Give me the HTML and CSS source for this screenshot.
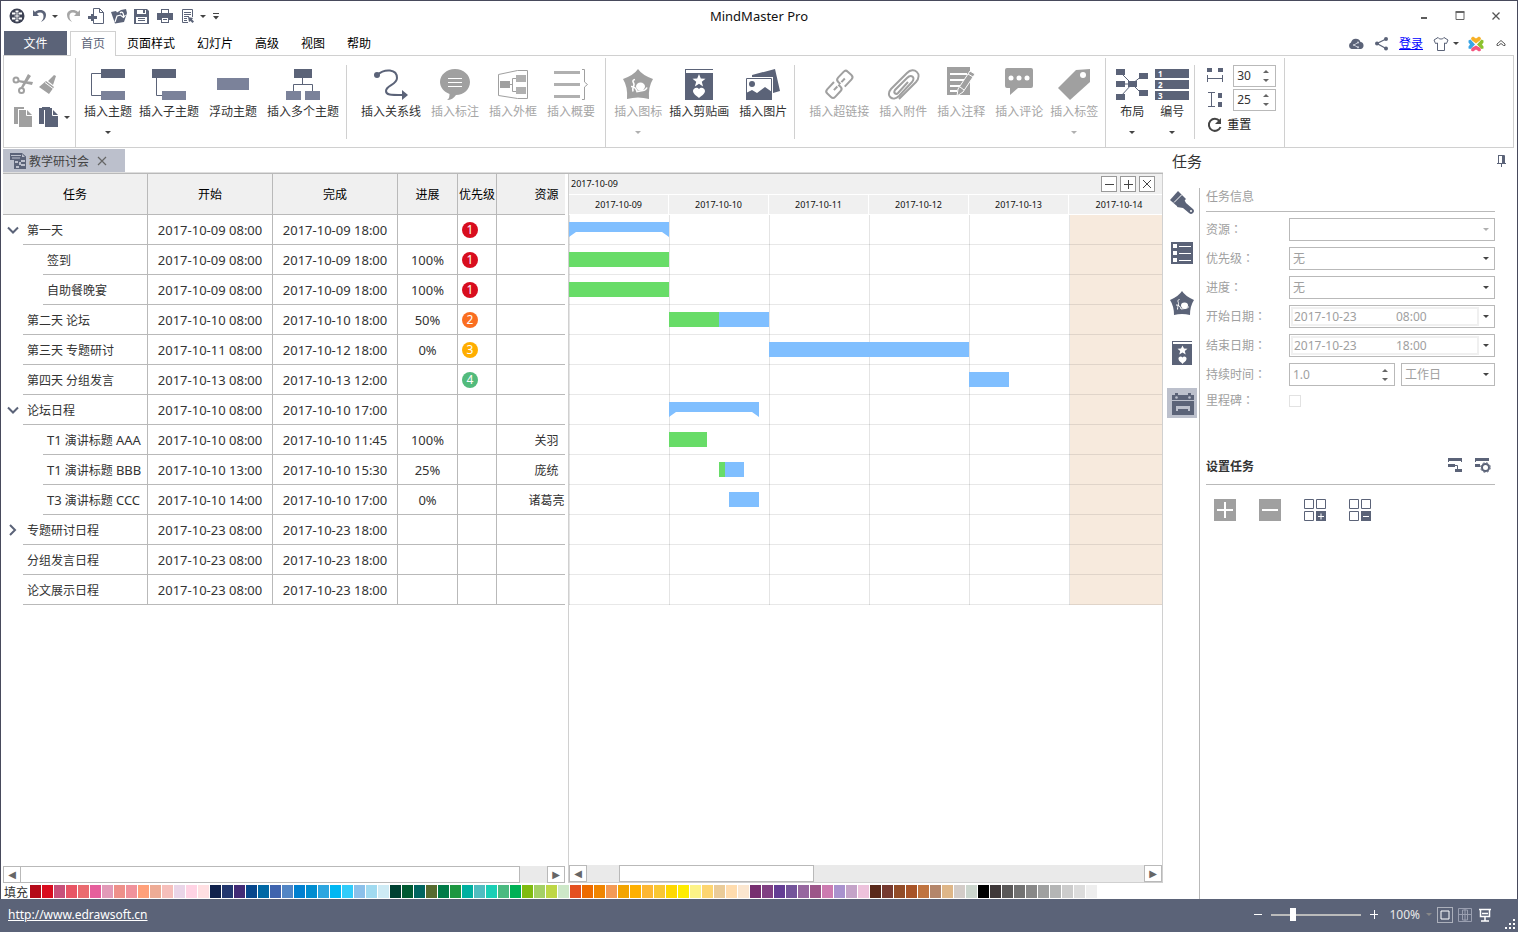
FILE: index.html
```html
<!DOCTYPE html>
<html lang="zh-CN">
<head>
<meta charset="utf-8">
<title>MindMaster Pro</title>
<link rel="stylesheet" href="styles.css">
</head>
<body>
<div class="window">
  <header class="titlebar">
    <div class="quick">
      <svg class="i16" viewBox="0 0 16 16"><circle cx="8" cy="8" r="7.500" fill="#3d4254"/><path d="M3 4.500h3.500v2H3zM9.500 4.500H13v2H9.500zM3 9.500h3.500v2H3zM9.500 9.500H13v2H9.500zM6.500 2.500h3v1.500h-3zM6.500 12h3v1.500h-3z" fill="#fff"/><path d="M8 4v8M5.500 8h5" stroke="#fff"/></svg>
      <span class="pair">
        <button class="flat" aria-label="撤销"><svg class="i16" viewBox="0 0 16 16"><path d="M1 2v6h6L4.800 5.800C8 3.500 12 4.500 11.500 9c-.2 2-1.200 3.500-2.500 5 3-1.500 5-3.500 5-7 0-5-7-6.500-11-3z" fill="#5b6378"/></svg></button>
        <span class="caret"></span>
      </span>
      <button class="flat" aria-label="重做"><svg class="i16" viewBox="0 0 16 16"><path d="M15 2v6H9l2.200-2.200C8 3.500 4 4.500 4.500 9c.2 2 1.200 3.500 2.500 5-3-1.500-5-3.500-5-7 0-5 7-6.500 11-3z" fill="#a6a6a6"/></svg></button>
      <button class="flat" aria-label="新建"><svg class="i16" viewBox="0 0 16 16"><path d="M5.500 6V.5h6l4 4v11h-10V13M11.500.5v4h4" fill="none" stroke="#5b6378"/><path d="M0 9.500h9M4.500 6v7" stroke="#5b6378" stroke-width="3"/></svg></button>
      <button class="flat" aria-label="打开"><svg class="i16" viewBox="0 0 16 16"><path d="M0 4l5-1 1 1.500L10 2l5-1 1 4-3 9-9 1.500z" fill="#5b6378"/><path d="M4 14 6 8l4-1M9 5c2-2 4 0 3.500 4M10 7.500l2.500 2 2-2.500" fill="none" stroke="#fff" stroke-width="1.200"/></svg></button>
      <button class="flat" aria-label="保存"><svg class="i16" viewBox="0 0 16 16"><path d="M0 1h13l2 2v13H0z" fill="#5b6378"/><path d="M3 2h9v4H3zM2 9h11v6H2z" fill="#fff"/><path d="M9 2h2v3H9zM4 10h7v1H4zM4 12h7v1H4z" fill="#5b6378"/></svg></button>
      <button class="flat" aria-label="打印"><svg class="i16" viewBox="0 0 16 16"><path d="M4 1h8v4h4v7h-4v3H4v-3H0V5h4z" fill="#5b6378"/><path d="M5 2h6v3H5zM5 10h6v4H5z" fill="#fff"/><path d="M6 11h4v1H6z" fill="#5b6378"/></svg></button>
      <span class="pair">
        <button class="flat" aria-label="预览"><svg class="i16" viewBox="0 0 16 16"><path d="M8 14.500H2.500v-13h10V9M4 4.500h7M4 6.500h7M4 8.500h5M4 10.500h3M4 12.500h3" fill="none" stroke="#5b6378"/><path d="M8 9l5 1-1 1.500 2 2-1.500 1.500-2-2L9 14z" fill="#5b6378"/></svg></button>
        <span class="caret"></span>
      </span>
      <svg class="more" viewBox="0 0 6 7"><path d="M0 .5h6" stroke="#444"/><path d="M0 3h6L3 6.500z" fill="#444"/></svg>
    </div>
    <div class="apptitle">MindMaster Pro</div>
    <div class="winbtns">
      <button class="flat" aria-label="最小化"><svg class="i12" viewBox="0 0 12 12"><path d="M3 8h6" stroke="#5c5c5c" stroke-width="2"/></svg></button>
      <button class="flat" aria-label="最大化"><svg class="i12" viewBox="0 0 12 12"><path d="M2 2.500h8v7H2z" fill="none" stroke="#666"/><path d="M1.500 2h9" stroke="#666" stroke-width="2"/></svg></button>
      <button class="flat" aria-label="关闭"><svg class="i12" viewBox="0 0 12 12"><path d="M2.500 2.500l7 7M9.500 2.500l-7 7" stroke="#555" stroke-width="1.300"/></svg></button>
    </div>
  </header>

  <nav class="menu">
    <button class="file">文件</button>
    <button class="mtab on">首页</button>
    <button class="mtab">页面样式</button>
    <button class="mtab">幻灯片</button>
    <button class="mtab">高级</button>
    <button class="mtab">视图</button>
    <button class="mtab">帮助</button>
    <div class="account">
      <svg class="i16" viewBox="0 0 16 16"><path d="M3.500 13a3.500 3.500 0 0 1-.5-6.500A5 5 0 0 1 12.500 6 3.600 3.600 0 0 1 13 13z" fill="#5b6378"/><path d="M10 6.500 6 9l4 2.500" fill="none" stroke="#c8ccd6"/><circle cx="10" cy="6.500" r="1.100" fill="#c8ccd6"/><circle cx="6" cy="9" r="1.100" fill="#c8ccd6"/><circle cx="10" cy="11.300" r="1.100" fill="#c8ccd6"/></svg>
      <svg class="i16" viewBox="0 0 16 16"><path d="M13 3 4 7.500l9 5" fill="none" stroke="#5b6378" stroke-width="1.300"/><circle cx="13" cy="3" r="2" fill="#5b6378"/><circle cx="4" cy="7.500" r="2" fill="#5b6378"/><circle cx="13" cy="12.500" r="2" fill="#5b6378"/></svg>
      <a href="#login" class="login">登录</a>
      <span class="pair">
        <svg class="i16" viewBox="0 0 16 16"><path d="M5 1.500 1 4l1.500 3.500L4.500 7v7.500h7V7l2 .5L15 4l-4-2.500c-1 2-5 2-6 0z" fill="none" stroke="#5b6378"/></svg>
        <span class="caret"></span>
      </span>
      <svg class="i16" viewBox="0 0 16 16"><path d="M3 2l2-1.500 3 2 3-2L13 2l-.5 2L8 7.500 3.500 4z" fill="#f7b026"/><path d="M13.500 3.500l2 1v2l-1.500 2 1.500 2v2l-2 .5L9 8.500z" fill="#8cc22e"/><path d="M3 14.500l.5-2.500L8 9.500l4.500 2.500.5 2.500-2 1-3-2-3 2z" fill="#f5557f"/><path d="M2.500 3.500l-2 1v2l1.500 2-1.500 2v2l2 .5L7 8.500z" fill="#3aa5e6"/></svg>
      <svg class="i16" viewBox="0 0 16 16"><path d="M4 9.500V8l4-3.500L12 8v1.500h-1.500L8 7.500l-2.500 2z" fill="none" stroke="#555"/></svg>
    </div>
  </nav>

  <section class="ribbon">
    <div class="clip">
      <button class="flat" aria-label="剪切"><svg class="i22" viewBox="0 0 22 22"><g fill="none" stroke="#a0a0a0" stroke-width="2"><circle cx="4" cy="7" r="2.500"/><circle cx="9.500" cy="17.500" r="2.500"/></g><path d="M6 7l15 2-1 3-14-3zM16 1l3 2-8 12-2-1z" fill="#a0a0a0"/></svg></button>
      <button class="flat" aria-label="格式刷"><svg class="i22" viewBox="0 0 22 22"><path d="M16 2l2 1-3 9-5-4zM8 8l8 6-5 7-10-7z" fill="#a0a0a0"/><path d="M7 9.500l8 6" stroke="#fff"/></svg></button>
      <span></span>
      <button class="flat" aria-label="复制"><svg class="i22" viewBox="0 0 22 22"><path d="M2 1h10v2H6v15H2z" fill="#a0a0a0"/><path d="M7 4h8l5 5v12H7z" fill="#a0a0a0"/><path d="M14.500 4v5.500H20" fill="none" stroke="#fff"/></svg></button>
      <button class="flat" aria-label="粘贴"><svg class="i22" viewBox="0 0 22 22"><path d="M1 2h3V1h8v1h2v2H6v14H1z" fill="#5b6378"/><path d="M7 4h8l5 5v12H7z" fill="#5b6378"/><path d="M14.500 4v5.500H20" fill="none" stroke="#fff"/></svg></button>
      <span class="caret"></span>
    </div>
    <i class="sep full"></i>
    <div class="group">
      <button class="tool drop"><svg viewBox="0 0 36 36"><path d="M11 7.500H1.500v22H11" fill="none" stroke="#5b6378"/><path d="M11 3h24v9H11z" fill="#5b6378"/><path d="M11 25h24v9H11z" fill="#7b829a"/></svg><span>插入主题</span></button>
      <button class="tool"><svg viewBox="0 0 36 36"><path d="M5.500 12v17.500H11" fill="none" stroke="#5b6378"/><path d="M1 3h24v9H1z" fill="#5b6378"/><path d="M11 25h24v9H11z" fill="#7b829a"/></svg><span>插入子主题</span></button>
      <button class="tool"><svg viewBox="0 0 36 36"><path d="M2 12h32v12H2z" fill="#7b829a"/></svg><span>浮动主题</span></button>
      <button class="tool"><svg viewBox="0 0 36 36"><path d="M17.500 12v6.500M8.500 25v-6.500h19V25" fill="none" stroke="#5b6378"/><path d="M9 3h18v9H9z" fill="#5b6378"/><path d="M1 25h15v9H1zM20 25h15v9H20z" fill="#7b829a"/></svg><span>插入多个主题</span></button>
    </div>
    <i class="sep"></i>
    <div class="group wide">
      <button class="tool"><svg viewBox="0 0 36 36"><path d="M4 9C12 2 24 3 24 12c0 7-11 7-11 13 0 4 4 4 17 4" fill="none" stroke="#5b6378" stroke-width="2"/><circle cx="4" cy="9" r="3" fill="#5b6378"/><path d="M29 24l6 5-6 5z" fill="#5b6378"/></svg><span>插入关系线</span></button>
      <button class="tool off"><svg viewBox="0 0 36 36"><path d="M18 3c8.500 0 15 6 15 13s-6 13-14 13c-2 3-5 5-9 5 2-1 2.500-3 2.500-6C7 26 3 21 3 16 3 9 9.500 3 18 3z" fill="#a0a0a0"/><path d="M11 12.500h14M11 16.500h14M11 20.500h14" stroke="#fff"/></svg><span>插入标注</span></button>
      <button class="tool off"><svg viewBox="0 0 36 36"><path d="M3.500 8.500l19-4h10v28h-10l-19-3zM15 18.500h3M21 12.500h-3.500v13H21" fill="none" stroke="#a0a0a0"/><path d="M5 15h10v7H5z" fill="#a0a0a0"/><path d="M21 9h10v7H21zM21 21h10v7H21z" fill="#b0b0b0"/></svg><span>插入外框</span></button>
      <button class="tool off"><svg viewBox="0 0 36 36"><path d="M1 5h26v3H1zM1 17h26v3H1zM1 29h26v3H1z" fill="#b0b0b0"/><path d="M29 3.500h2.500V16l3 2.500-3 2.500v12.500H29" fill="none" stroke="#a0a0a0"/></svg><span>插入概要</span></button>
    </div>
    <i class="sep full"></i>
    <div class="group">
      <button class="tool drop off"><svg viewBox="0 0 36 36"><path d="M18 3q4 6 15 10-5 8-4 20-11-3-22 0 1-12-4-20Q14 9 18 3z" fill="#a0a0a0"/><ellipse cx="20.500" cy="20.500" rx="4.500" ry="4" fill="#fff"/><path d="M15 13.500c-4 1-1 3-1 5s-2 3-1 7M11 20.500c3 0 5 1 6 5l6-1c2 0 3-1 4-3" fill="none" stroke="#fff" stroke-width="1.600"/></svg><span>插入图标</span></button>
      <button class="tool"><svg viewBox="0 0 36 36"><path d="M4 3h28v31H4z" fill="#5b6378"/><path d="M5 4h27v3H5z" fill="#fff"/><path d="M18 8l1.800 4.600 4.700.2-3.700 3 1.300 4.700-4.100-2.700-4.100 2.700 1.300-4.700-3.700-3 4.700-.2zM18 23c2-2.500 6-1 6 2 0 3-4 5-6 7-2-2-6-4-6-7 0-3 4-4.500 6-2z" fill="#fff"/></svg><span>插入剪贴画</span></button>
      <button class="tool"><svg viewBox="0 0 36 36"><path d="M7 9l23-6 5 22-7 2V11H7z" fill="#5b6378"/><path d="M1.500 12.500h25v21h-25z" fill="#fff" stroke="#5b6378"/><circle cx="7" cy="18" r="3" fill="#5b6378"/><path d="M1 27l6-3 5 3 8-6 7 5v8H1z" fill="#5b6378"/></svg><span>插入图片</span></button>
    </div>
    <i class="sep"></i>
    <div class="group wide">
      <button class="tool off"><svg viewBox="0 0 36 36"><g fill="none" stroke="#a0a0a0" stroke-width="2" transform="rotate(-47 18 18)"><path d="M16 13H6q-3 0-3 3v5q0 3 3 3h8q3 0 3-3v-3M20 24h10q3 0 3-3v-5q0-3-3-3h-8q-3 0-3 3v3M10 18.500h5M21 18.500h5"/></g></svg><span>插入超链接</span></button>
      <button class="tool off"><svg viewBox="0 0 36 36"><path d="M14 33 31 16c7-8-2-16-9-9L6 23c-6 7 2 13 8 7l13-14c4-5-1-8-5-4L10 24c-2 3 1 5 3 3l10-11" fill="none" stroke="#a0a0a0" stroke-width="2"/></svg><span>插入附件</span></button>
      <button class="tool off"><svg viewBox="0 0 36 36"><path d="M4 1h23v28H4z" fill="#a0a0a0"/><path d="M7 8h17M7 14h14M7 20h10M7 25h7" stroke="#fff" stroke-width="2"/><path d="M27 5l5 3-12 18-6 4 1-7z" fill="#a0a0a0" stroke="#fff"/><path d="M25 8l5 3M17 21l4 3" stroke="#fff"/></svg><span>插入注释</span></button>
      <button class="tool off"><svg viewBox="0 0 36 36"><path d="M6 2h24q2 0 2 2v16q0 2-2 2H17l-8 7v-7H6q-2 0-2-2V4q0-2 2-2z" fill="#a0a0a0"/><g fill="#fff"><circle cx="10" cy="12" r="2.500"/><circle cx="18" cy="12" r="2.500"/><circle cx="26" cy="12" r="2.500"/></g></svg><span>插入评论</span></button>
      <button class="tool drop off"><svg viewBox="0 0 36 36"><path d="M20 4l14-1v13L14 34 2 22z" fill="#a0a0a0"/><circle cx="27" cy="9" r="3" fill="#fff"/></svg><span>插入标签</span></button>
    </div>
    <i class="sep full"></i>
    <div class="group">
      <button class="tool drop"><svg viewBox="0 0 36 36"><path d="M7 7l11 11L29 9M7 18h11M7 30l11-12 11 11" fill="none" stroke="#5b6378"/><path d="M2 3h9v6H2zM2 15h9v6H2zM2 28h9v6H2zM14 15h9v6h-9zM25 7h9v6h-9zM25 24h9v6h-9z" fill="#5b6378"/></svg><span>布局</span></button>
      <button class="tool drop"><svg viewBox="0 0 36 36"><path d="M1 3h34v9H1zM1 14h34v9H1zM1 25h34v9H1z" fill="#5b6378"/><g class="nums"><text x="4" y="11">1</text><text x="4" y="22">2</text><text x="4" y="33">3</text></g></svg><span>编号</span></button>
    </div>
    <i class="sep"></i>
    <div class="spacing">
      <label for="hgap"><svg class="i16" viewBox="0 0 16 16"><path d="M0 0h5v4H0zM11 0h5v4h-5z" fill="#5b6378"/><path d="M.5 7v7M15.500 7v7M0 10.500h16" stroke="#5b6378"/></svg></label>
      <span class="spin"><input id="hgap" value="30" aria-label="水平间距"><span class="arrows"></span></span>
      <label for="vgap"><svg class="i16" viewBox="0 0 16 16"><path d="M1 .5h7M1 14.500h7M4.500 0v15" stroke="#5b6378"/><path d="M11 1h4v5h-4zM11 10h4v5h-4z" fill="#5b6378"/></svg></label>
      <span class="spin"><input id="vgap" value="25" aria-label="垂直间距"><span class="arrows"></span></span>
      <button class="reset"><svg class="i16" viewBox="0 0 16 16"><path d="M12.500 4A6 6 0 1 0 13.500 10" fill="none" stroke="#444" stroke-width="2"/><path d="M14 1v6H8z" fill="#444"/></svg>重置</button>
    </div>
    <i class="sep full"></i>
  </section>

  <main class="work">
    <div class="document">
      <div class="doctabs">
        <div class="doctab"><svg class="i16" viewBox="0 0 16 16"><path d="M0 0h12l4 3.500V16H4V7H0z" fill="#5b6378"/><path d="M1 2h10v1H1zM2 4.500h8v1H2zM12 1v3h3zM5 8h3v2H5zM11 7h4v2h-4zM6 13h3v2H6zM11 11h4v2h-4zM9 9h2v3H9z" fill="#bcc0cc"/></svg><span>教学研讨会</span><button class="flat" aria-label="关闭标签"><svg class="i12" viewBox="0 0 12 12"><path d="M2 2l8 8M10 2l-8 8" stroke="#666" stroke-width="1.200"/></svg></button></div>
      </div>
      <div class="panes">
        <div class="sheet">
          <div class="tablebox">
            <table>
              <colgroup><col class="c-name"><col class="c-date"><col class="c-date"><col class="c-prog"><col class="c-pri"><col class="c-res"></colgroup>
              <thead><tr><th>任务</th><th>开始</th><th>完成</th><th>进展</th><th>优先级</th><th>资源</th></tr></thead>
              <tbody id="tasks"></tbody>
            </table>
          </div>
          <div class="hscroll"><button aria-label="向左">◀</button><div class="track"><div class="thumb"></div></div><button aria-label="向右">▶</button></div>
        </div>
        <div class="gantt">
          <div class="ghead"><span>2017-10-09</span>
            <div class="gbtns"><button aria-label="缩小"><svg viewBox="0 0 14 14"><path d="M3 7.500h9" stroke="#444"/></svg></button><button aria-label="放大"><svg viewBox="0 0 14 14"><path d="M3 7.500h9M7.500 3v9" stroke="#444"/></svg></button><button aria-label="关闭甘特图"><svg viewBox="0 0 14 14"><path d="M3 3l8 8M11 3l-8 8" stroke="#444"/></svg></button></div>
          </div>
          <div class="days"><span>2017-10-09</span><span>2017-10-10</span><span>2017-10-11</span><span>2017-10-12</span><span>2017-10-13</span><span>2017-10-14</span></div>
          <div class="gbody" id="bars"></div>
          <div class="hscroll"><button aria-label="向左">◀</button><div class="track"><div class="thumb short"></div></div><button aria-label="向右">▶</button></div>
        </div>
      </div>
      <div class="palette" id="palette"><span>填充</span></div>
    </div>

    <aside class="side">
      <div class="sidetitle"><span>任务</span><svg class="i12" viewBox="0 0 12 12"><path d="M2 8.500h9M6.500 8v4M3.500.5v8M3 .5h6.500v8" fill="none" stroke="#5b6378"/><path d="M7 1h3v7H7z" fill="#5b6378"/></svg></div>
      <div class="sidebody">
        <div class="strip">
          <button aria-label="样式"><svg viewBox="0 0 24 24"><path d="M8 0l8 8-8 8-8-7z" fill="#5b6378"/><path d="M13 6l3 6 7 6q2 2 0 4t-4 0l-6-5-6-1z" fill="#5b6378"/><path d="M4 11.500 12 3.500" stroke="#fff"/><circle cx="21" cy="20" r="1" fill="#fff"/></svg></button>
          <button aria-label="大纲"><svg viewBox="0 0 24 24"><path d="M1 1h22v22H1z" fill="#5b6378"/><path d="M3 3h4v4H3zM3 10h4v4H3zM3 17h4v4H3z" fill="#fff"/><path d="M9 5.500h12M9 12.500h12M9 19.500h12" stroke="#fff"/></svg></button>
          <button aria-label="图标"><svg viewBox="0 0 24 24"><path d="M12 0q3 5 12 9-4 6-4 15-8-2-16 0 0-9-4-15Q9 5 12 0z" fill="#5b6378"/><ellipse cx="14.500" cy="14.500" rx="3.500" ry="3" fill="#fff"/><path d="M9.500 8.500c-3 1-1 2-1 4s-1 3-1 6M6 14c3 0 4 1 5 4l4-.5c2 0 3-1 4-2" fill="none" stroke="#fff"/></svg></button>
          <button aria-label="剪贴画"><svg viewBox="0 0 24 24"><path d="M2 0h20v24H2z" fill="#5b6378"/><path d="M3 1h19v2H3z" fill="#fff"/><path d="M12.500 4.500l1.500 3 3.500.3-2.700 2.200.9 3.500-3.200-1.900-3.200 1.900.9-3.500-2.700-2.200 3.500-.3zM12.500 16.500c1.500-2 4.500-.5 4 1.500 0 2-3 3.500-4 5-1-1.500-4-3-4-5-.500-2 2.500-3.500 4-1.500z" fill="#fff"/></svg></button>
          <button class="on" aria-label="任务"><svg viewBox="0 0 24 24"><path d="M2 4h3V2h3v2h10V2h3v2h3v5H2zM2 10h22v15H2z" fill="#5b6378"/><circle cx="6.500" cy="6.500" r="1.300" fill="#bcc0cc"/><circle cx="19.500" cy="6.500" r="1.300" fill="#bcc0cc"/><path d="M6 15h14v5h-2v-2H8v2H6z" fill="#bcc0cc"/></svg></button>
        </div>
        <form class="props">
          <h2>任务信息</h2>
          <div class="field"><label for="res">资源<span class="colon" lang="zh-TW">：</span></label><span class="pick dim"><select id="res" disabled><option></option></select></span></div>
          <div class="field"><label for="pri">优先级<span class="colon" lang="zh-TW">：</span></label><span class="pick"><select id="pri"><option>无</option></select></span></div>
          <div class="field"><label for="prog">进度<span class="colon" lang="zh-TW">：</span></label><span class="pick"><select id="prog"><option>无</option></select></span></div>
          <div class="field"><label for="start">开始日期<span class="colon" lang="zh-TW">：</span></label><span class="pick date"><span class="well"><input id="start" value="2017-10-23"><input value="08:00" aria-label="开始时间"></span></span></div>
          <div class="field"><label for="end">结束日期<span class="colon" lang="zh-TW">：</span></label><span class="pick date"><span class="well"><input id="end" value="2017-10-23"><input value="18:00" aria-label="结束时间"></span></span></div>
          <div class="field"><label for="dur">持续时间<span class="colon" lang="zh-TW">：</span></label><span class="spin grow"><input id="dur" value="1.0"><span class="arrows"></span></span><span class="pick unit"><select aria-label="时间单位"><option>工作日</option></select></span></div>
          <div class="field"><label for="mile">里程碑<span class="colon" lang="zh-TW">：</span></label><input id="mile" type="checkbox"></div>
          <div class="sethead"><h2>设置任务</h2>
            <button type="button" class="flat" aria-label="关联任务"><svg class="i16" viewBox="0 0 16 16"><path d="M1 1h14v4h-1V4H2v1H1zM1 7h7v3H1z" fill="#5b6378"/><path d="M7 8.500h3.500V13" fill="none" stroke="#5b6378"/><path d="M8 12h7v3H8z" fill="#5b6378"/></svg></button>
            <button type="button" class="flat" aria-label="任务设置"><svg class="i16" viewBox="0 0 16 16"><path d="M0 1h14v3H1v1H0zM0 7h5v3H0z" fill="#5b6378"/><circle cx="10.500" cy="10.500" r="3.500" fill="#fff" stroke="#5b6378" stroke-width="2"/><circle cx="10.500" cy="10.500" r="4.800" fill="none" stroke="#5b6378" stroke-dasharray="2 1.800"/></svg></button>
          </div>
          <div class="setbtns">
            <button type="button" class="flat" aria-label="添加"><svg viewBox="0 0 22 22"><path d="M0 0h22v22H0z" fill="#a0a0a0"/><path d="M3 11h16M11 3v16" stroke="#fff" stroke-width="2"/></svg></button>
            <button type="button" class="flat" aria-label="删除"><svg viewBox="0 0 22 22"><path d="M0 0h22v22H0z" fill="#a0a0a0"/><path d="M3 11h16" stroke="#fff" stroke-width="2"/></svg></button>
            <button type="button" class="flat" aria-label="全部添加"><svg viewBox="0 0 22 22"><path d="M.5.500h9v9h-9zM12.500.500h9v9h-9zM.5 12.500h9v9h-9z" fill="none" stroke="#5b6378"/><path d="M12 12h10v10H12z" fill="#5b6378"/><path d="M14 17.500h6M17 14.500v6" stroke="#fff"/></svg></button>
            <button type="button" class="flat" aria-label="全部删除"><svg viewBox="0 0 22 22"><path d="M.5.500h9v9h-9zM12.500.500h9v9h-9zM.5 12.500h9v9h-9z" fill="none" stroke="#5b6378"/><path d="M12 12h10v10H12z" fill="#5b6378"/><path d="M14 17.500h6" stroke="#fff"/></svg></button>
          </div>
        </form>
      </div>
    </aside>
  </main>

  <footer class="status">
    <a href="http://www.edrawsoft.cn">http://www.edrawsoft.cn</a>
    <div class="zoom">
      <button class="flat" aria-label="缩小"><svg class="i12" viewBox="0 0 12 12"><path d="M2 5.500h8" stroke="#fff"/></svg></button>
      <input type="range" min="0" max="100" value="22" aria-label="缩放">
      <button class="flat" aria-label="放大"><svg class="i12" viewBox="0 0 12 12"><path d="M2 5.500h8M6.500 1v9" stroke="#fff"/></svg></button>
      <span class="pct">100%</span><span class="caret"></span>
      <svg class="i16" viewBox="0 0 16 16"><path d="M.5.500h15v15H.5z" fill="none" stroke="#fff" stroke-dasharray="1 1"/><path d="M4 4h8v8H4z" fill="none" stroke="#fff"/></svg>
      <svg class="i16" viewBox="0 0 16 16"><path d="M1.500 1.500h13v13h-13zM5.500 3h5v10h-5zM1 7.500h14M8 1v14" fill="none" stroke="#9a9fb0"/></svg>
      <svg class="i16" viewBox="0 0 16 16"><path d="M2 2.500h12M3.500 3v6.500h9V3M5 6.500h6M8 9v5M4 14h8" fill="none" stroke="#fff" stroke-width="1.500"/></svg>
    </div>
    <svg class="grip" viewBox="0 0 12 12"><path d="M9 1h2v2H9zM5 5h2v2H5zM9 5h2v2H9zM1 9h2v2H1zM5 9h2v2H5zM9 9h2v2H9z" fill="#fff"/></svg>
  </footer>
</div>
<script src="app.js"></script>
</body>
</html>
```
FILE: styles.css
```css
* { box-sizing: border-box; }
body { margin: 0; font: 12px/18px "Noto Sans", "Noto Sans CJK SC", sans-serif; color: #333; background: #fff; }
button, input, select { font: inherit; color: inherit; margin: 0; padding: 0; border: 0; background: none; }
svg { display: block; flex: none; }
.i12 { width: 12px; height: 12px; }
.i16 { width: 16px; height: 16px; }
.i22 { width: 22px; height: 22px; }
.flat { display: block; flex: none; }
.caret { width: 0; height: 0; border: 3px solid transparent; border-top-color: #444; border-bottom: 0; }
.pair { display: flex; align-items: center; gap: 4px; }
.window { display: flex; flex-direction: column; min-height: 100vh; border: 1px solid #484a5c; border-bottom: 0; }

/* title bar */
.titlebar { display: grid; grid-template-columns: 1fr auto 1fr; align-items: center; height: 30px; }
.quick { display: flex; align-items: center; gap: 7px; padding-left: 8px; }
.more { width: 6px; height: 7px; }
.apptitle { font-size: 13px; color: #111; }
.winbtns { display: flex; justify-content: flex-end; gap: 24px; padding-right: 15px; }

/* menu */
.menu { display: flex; height: 25px; padding: 0 8px 0 3px; color: #000; position: relative; z-index: 1; }
.file { width: 63px; margin-right: 3px; padding-top: 1px; background: #5b6378; color: #fff; height: 24px; }
.mtab { padding: 0 11px; }
.mtab.on { padding: 0 10px; border: 1px solid #d0d0d0; border-bottom: 0; background: #fff; color: #5b6378; }
.account { display: flex; align-items: center; gap: 9px; margin-left: auto; }
.login { color: #00f; margin: 0 1px; }

/* ribbon */
.ribbon { display: flex; align-items: stretch; height: 93px; margin: -1px 3px 0 2px; border: 1px solid #d0d0d0; }
.sep { width: 1px; flex: none; background: #d0d0d0; margin: 9px 0 8px; }
.sep.full { margin: 2px 0 0; }
.clip { width: 71px; padding: 17px 0 0 8px; display: grid; grid-template-columns: 22px 22px 6px; grid-auto-rows: 22px; gap: 11px 4px; align-items: center; }
.group { display: flex; align-items: flex-start; padding: 10px 2px 0 6px; }
.group.wide { padding: 10px 5px 0 9px; }
.tool { display: flex; flex-direction: column; align-items: center; padding: 0 5px; white-space: nowrap; min-width: 40px; }
.tool svg { width: 36px; height: 36px; margin-bottom: 1px; }
.tool.drop { padding: 0 2px; }
.tool.drop::after { content: ""; margin-top: 10px; border: 3px solid transparent; border-top-color: #444; border-bottom: 0; }
.tool.off { color: #a6a6a6; }
.tool.drop.off::after { border-top-color: #b0b0b0; }
.nums { fill: #fff; font-size: 8px; font-weight: 700; }
.spacing { display: grid; grid-template-columns: 16px 43px; gap: 2px 10px; align-content: start; align-items: center; padding: 9px 8px 0 12px; }
.spin { display: flex; align-items: center; height: 22px; border: 1px solid #b9b9b9; padding: 0 6px 0 3px; font-size: 12px; }
.spin input { flex: 1; min-width: 0; width: 20px; }
.arrows { display: grid; gap: 6px; }
.arrows::before, .arrows::after { content: ""; border: 3px solid transparent; }
.arrows::before { border-bottom-color: #666; border-top: 0; }
.arrows::after { border-top-color: #666; border-bottom: 0; }
.reset { grid-column: 1 / -1; display: flex; align-items: center; gap: 4px; height: 24px; color: #222; }

/* work area */
.work { display: flex; flex: 1; min-height: 0; }
.document { flex: 1; min-width: 0; display: flex; flex-direction: column; padding-left: 2px; }
.doctabs { display: flex; padding-top: 1px; border-bottom: 1px solid #dedede; height: 25px; }
.doctab { display: flex; align-items: center; gap: 3px; height: 23px; width: 122px; padding-left: 7px; background: #bcc0cc; color: #444; }
.doctab span { padding-top: 2px; }
.doctab .flat { margin-left: 4px; }
.panes { display: flex; flex: 1; border-top: 1px solid #b9b9b9; }
.sheet { width: 562px; flex: none; display: flex; flex-direction: column; }
.tablebox { overflow: hidden; flex: 1; }
table { table-layout: fixed; width: 594px; border-spacing: 0; }
.c-name { width: 145px; }
.c-date { width: 125px; }
.c-prog { width: 60px; }
.c-pri { width: 39px; }
.c-res { width: 100px; }
th, td { padding: 0; border-right: 1px solid #b9b9b9; text-align: center; white-space: nowrap; }
th { height: 41px; padding-top: 2px; background: #f0f0f0; border-bottom: 1px solid #b9b9b9; font-weight: 400; color: #000; }
td { height: 30px; border-bottom: 1px solid #b9b9b9; }
td.name { border-bottom: 0; text-align: left; }
td.who { padding-top: 2px; }
td.num, .latin { font-size: 13px; }
.latin { line-height: 0; }
.namebox { display: flex; height: 30px; }
.toggle { width: 20px; display: flex; align-items: center; justify-content: center; }
.label { flex: 1; padding: 7px 0 0 4px; border-bottom: 1px solid #b9b9b9; }
.child .label { margin-left: 20px; }
.badge { display: block; width: 16px; height: 16px; margin-left: 4px; border-radius: 8px; color: #fff; line-height: 16px; }
.p1 { background: #d80d1e; }
.p2 { background: #fa6e20; }
.p3 { background: #ffae00; }
.p4 { background: #52bb7c; }

.hscroll { display: flex; height: 17px; background: #eaeaea; }
.hscroll button { width: 18px; border: 1px solid #b9b9b9; background: #fff; color: #666; font: 10px/13px "DejaVu Sans", sans-serif; }
.track { flex: 1; display: flex; }
.thumb { flex: none; width: 500px; margin-left: -1px; border: 1px solid #b9b9b9; background: #fff; }
.thumb.short { width: 195px; margin-left: 32px; }

/* gantt */
.gantt { flex: 1; min-width: 0; display: flex; flex-direction: column; margin-left: 3px; border: 1px solid #d0d0d0; border-top: 0; font-size: 9px; color: #111; }
.ghead { display: flex; align-items: center; justify-content: space-between; height: 21px; padding: 0 7px 0 2px; background: #f0f0f0; border-bottom: 1px solid #fff; }
.gbtns { display: flex; gap: 3px; }
.gbtns button { width: 16px; height: 16px; border: 1px solid #999; background: #fff; }
.days { display: flex; height: 20px; overflow: hidden; border-bottom: 1px solid #fff; }
.days span { flex: 0 0 100px; padding-top: 1px; text-align: center; background: #f0f0f0; border-right: 1px solid #fff; }
.days span:last-child { flex: 1 0 100px; border: 0; }
.gbody { flex: 1; }
.lines { background: repeating-linear-gradient(to right, #e4e4e4 0 1px, transparent 1px 100px) 0 0 / 501px 100% no-repeat, linear-gradient(to right, transparent 500px, #f7eadd 500px); }
.row { display: flex; height: 30px; padding-top: 7px; border-bottom: 1px solid rgba(0, 0, 0, .09); }
.bar { height: 15px; background: #80bfff; }
.bar.sum { clip-path: polygon(0 0, 100% 0, 100% 100%, calc(100% - 7px) 10px, 7px 10px, 0 100%); }
.done { height: 15px; background: #68dc68; }

/* side panel */
.side { width: 354px; flex: none; display: flex; flex-direction: column; }
.sidetitle { display: flex; justify-content: space-between; align-items: center; height: 26px; padding: 0 10px 0 9px; font-size: 15px; }
.sidebody { display: flex; flex: 1; margin-top: 14px; }
.strip { width: 37px; flex: none; padding-left: 4px; border-right: 1px solid #b9b9b9; display: flex; flex-direction: column; gap: 20px; }
.strip button { width: 30px; height: 30px; padding: 3px; }
.strip .on { background: #bcc0cc; }
.props { flex: 1; min-width: 0; padding: 0 22px 0 6px; color: #a0a0a0; }
h2 { margin: 0 0 6px; height: 24px; font-size: 12px; font-weight: 400; line-height: 18px; border-bottom: 1px solid #b9b9b9; }
.field { display: flex; align-items: center; height: 23px; margin-bottom: 6px; }
.field label { width: 83px; flex: none; }
.colon { font-family: "Noto Sans CJK TC", sans-serif; }
.pick { flex: 1; min-width: 0; position: relative; display: flex; height: 23px; border: 1px solid #b9b9b9; }
.pick::after { content: ""; position: absolute; right: 5px; top: 9px; border: 3px solid transparent; border-top-color: #444; border-bottom: 0; pointer-events: none; }
.pick.dim::after { border-top-color: #b0b0b0; }
.pick select { flex: 1; appearance: none; padding-left: 3px; }
.pick.date { padding: 1px 15px 1px 1px; }
.well { display: flex; flex: 1; min-width: 0; border: 2px solid #f0f0f0; font-size: 12px; padding-left: 1px; }
.well input { flex: 0 0 102px; height: 15px; min-width: 0; }
.well input + input { flex: 1; width: 40px; }
.spin.grow { flex: 1; min-width: 0; height: 23px; margin-right: 6px; }
.pick.unit { flex: 0 0 94px; }
input[type="checkbox"] { appearance: none; width: 12px; height: 12px; border: 1px solid #e2e2e2; margin-bottom: 6px; }
.field:has(input[type="checkbox"]) label { margin-bottom: 6px; }
.sethead { display: flex; gap: 12px; margin-top: 42px; padding-right: 4px; height: 28px; border-bottom: 1px solid #b9b9b9; }
.sethead h2 { flex: 1; border: 0; font-weight: 700; line-height: 20px; color: #333; }
.sethead .flat { height: 16px; }
.setbtns { display: flex; gap: 23px; padding: 14px 8px; }
.setbtns svg { width: 22px; height: 22px; }

/* palette and status */
.palette { display: flex; gap: 1px; height: 16px; padding: 2px 0 1px 1px; align-items: stretch; }
.palette span { width: 25px; line-height: 15px; white-space: nowrap; }
.palette i { width: 11px; }
.status { display: flex; align-items: center; justify-content: space-between; height: 33px; margin: 0 -1px; padding: 0 2px 2px 8px; background: #5b6378; color: #fff; }
.status a { color: #fff; }
.zoom { display: flex; align-items: center; gap: 4px; margin-left: auto; padding-right: 11px; }
.zoom input { appearance: none; width: 90px; height: 14px; margin: 0 3px; background: linear-gradient(#bbb, #bbb) 0 50% / 100% 2px no-repeat; }
.zoom input::-webkit-slider-thumb { appearance: none; width: 6px; height: 13px; background: #fff; }
.pct { margin-left: 5px; color: #e8e8e8; }
.zoom .caret { border-top-color: #888; margin: 0 1px 0 2px; }
.grip { width: 12px; height: 12px; align-self: flex-end; }
```
FILE: app.js
```js
const tasks = [
  { name: '第一天', open: true, start: '2017-10-09 08:00', end: '2017-10-09 18:00', pri: 1, bar: [0, 100], sum: true },
  { name: '签到', child: true, start: '2017-10-09 08:00', end: '2017-10-09 18:00', done: 100, pri: 1, bar: [0, 100] },
  { name: '自助餐晚宴', child: true, start: '2017-10-09 08:00', end: '2017-10-09 18:00', done: 100, pri: 1, bar: [0, 100] },
  { name: '第二天 论坛', start: '2017-10-10 08:00', end: '2017-10-10 18:00', done: 50, pri: 2, bar: [100, 100] },
  { name: '第三天 专题研讨', start: '2017-10-11 08:00', end: '2017-10-12 18:00', done: 0, pri: 3, bar: [200, 200] },
  { name: '第四天 分组发言', start: '2017-10-13 08:00', end: '2017-10-13 12:00', pri: 4, bar: [400, 40] },
  { name: '论坛日程', open: true, start: '2017-10-10 08:00', end: '2017-10-10 17:00', bar: [100, 90], sum: true },
  { name: '<span class="latin">T1</span> 演讲标题 <span class="latin">AAA</span>', child: true, start: '2017-10-10 08:00', end: '2017-10-10 11:45', done: 100, who: '关羽', bar: [100, 38] },
  { name: '<span class="latin">T1</span> 演讲标题 <span class="latin">BBB</span>', child: true, start: '2017-10-10 13:00', end: '2017-10-10 15:30', done: 25, who: '庞统', bar: [150, 25] },
  { name: '<span class="latin">T3</span> 演讲标题 <span class="latin">CCC</span>', child: true, start: '2017-10-10 14:00', end: '2017-10-10 17:00', done: 0, who: '诸葛亮', bar: [160, 30] },
  { name: '专题研讨日程', open: false, start: '2017-10-23 08:00', end: '2017-10-23 18:00' },
  { name: '分组发言日程', start: '2017-10-23 08:00', end: '2017-10-23 18:00' },
  { name: '论文展示日程', start: '2017-10-23 08:00', end: '2017-10-23 18:00' }
];

const chevron = open => open === undefined ? '' :
  `<svg class="i12" viewBox="0 0 12 12"><path d="${open ? 'M1 3.500l5 5 5-5' : 'M3 1l5 5-5 5'}" fill="none" stroke="#5b6378" stroke-width="2"/></svg>`;

document.getElementById('tasks').innerHTML = tasks.map(t => `<tr>
  <td class="name"><div class="namebox${t.child ? ' child' : ''}"><span class="toggle">${chevron(t.open)}</span><span class="label">${t.name}</span></div></td>
  <td class="num">${t.start}</td><td class="num">${t.end}</td>
  <td class="num">${t.done === undefined ? '' : t.done + '%'}</td>
  <td>${t.pri ? `<span class="badge p${t.pri}">${t.pri}</span>` : ''}</td>
  <td class="who">${t.who || ''}</td></tr>`).join('');

document.getElementById('bars').innerHTML = '<div class="lines">' + tasks.map(t => {
  if (!t.bar) return '<div class="row"></div>';
  const [left, width] = t.bar;
  const done = t.done ? `<div class="done" style="width:${t.done}%"></div>` : '';
  return `<div class="row"><div class="bar${t.sum ? ' sum' : ''}" style="margin-left:${left}px;width:${width}px">${done}</div></div>`;
}).join('') + '</div>';

const colors = ('b50a19 d90c1e c8507a e85565 ea6b70 e65f9c e29ab8 ee908a f0929c ffa07a eeac96 f6bfbb ead5e8 ffd3e4 ffdfe2 ' +
  '10214c 22376f 422b76 07478c 0068a5 3f64ae 5185c5 0080d0 008dd0 2ca6e0 00b7f3 30ccfa 8bc0ea a0daf0 ceebf5 ' +
  '004132 005a32 006560 566b2f 007b48 1e9741 00b0a0 50bdc0 1acfb5 4aba80 00b155 80bb10 a4d065 bed745 cde8c8 ' +
  'e45020 ed6b00 f08500 f39a55 f2a400 ffb000 fdb733 f9c733 ffd800 ffec00 fdf387 fdd570 eacb98 ffdcae fbe6cf ' +
  '772f70 803f82 643d94 74549a 97679f 9c5689 cc7bb0 a992ce c4a3c8 edc2dc ' +
  '5a291b 763a30 924c28 a85428 c07440 b4866b deb688 d3ccc8 cbd5cd ' +
  '000000 3f3839 5a5858 727272 888888 9fa0a0 b4b5b5 cccccc dcdcdc eeeeee').split(' ');
document.getElementById('palette').insertAdjacentHTML('beforeend',
  colors.map(c => `<i style="background:#${c}"></i>`).join(''));
```
